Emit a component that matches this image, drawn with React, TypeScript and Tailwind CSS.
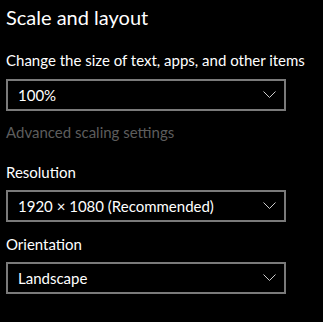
import React from "react";

function Chevron() {
  return (
    <svg width="13" height="7" viewBox="0 0 13 7" className="mb-[2px] shrink-0">
      <path d="M0.5 0.5 L6.5 6.5 L12.5 0.5" fill="none" stroke="#cccccc" strokeWidth="1" />
    </svg>
  );
}

function Select({ value }: { value: string }) {
  return (
    <div className="ml-[6px] flex h-[32px] w-[280px] items-center justify-between border-2 border-[#7a7a7a] pl-[10px] pr-[8px]">
      <span className="text-[15px] leading-[20px] text-white">{value}</span>
      <Chevron />
    </div>
  );
}

export default function App() {
  return (
    <div
      className="h-[322px] w-[323px] overflow-hidden bg-black text-white"
      style={{ fontFamily: 'Lato, "Noto Sans", sans-serif' }}
    >
      <div className="pl-[6px] pt-[3px] text-[20px] leading-[28px]">Scale and layout</div>
      <div className="mt-[19px] whitespace-nowrap pl-[6px] text-[15px] leading-[20px]">
        Change the size of text, apps, and other items
      </div>
      <div className="mt-[9px]">
        <Select value="100%" />
      </div>
      <div className="mt-[11px] pl-[6px] text-[15px] leading-[20px] text-[#5d5d5d]">
        Advanced scaling settings
      </div>
      <div className="mt-[20px] pl-[6px] text-[15px] leading-[20px]">Resolution</div>
      <div className="mt-[8px]">
        <Select value="1920 × 1080 (Recommended)" />
      </div>
      <div className="mt-[12px] pl-[6px] text-[15px] leading-[20px]">Orientation</div>
      <div className="mt-[8px]">
        <Select value="Landscape" />
      </div>
    </div>
  );
}
